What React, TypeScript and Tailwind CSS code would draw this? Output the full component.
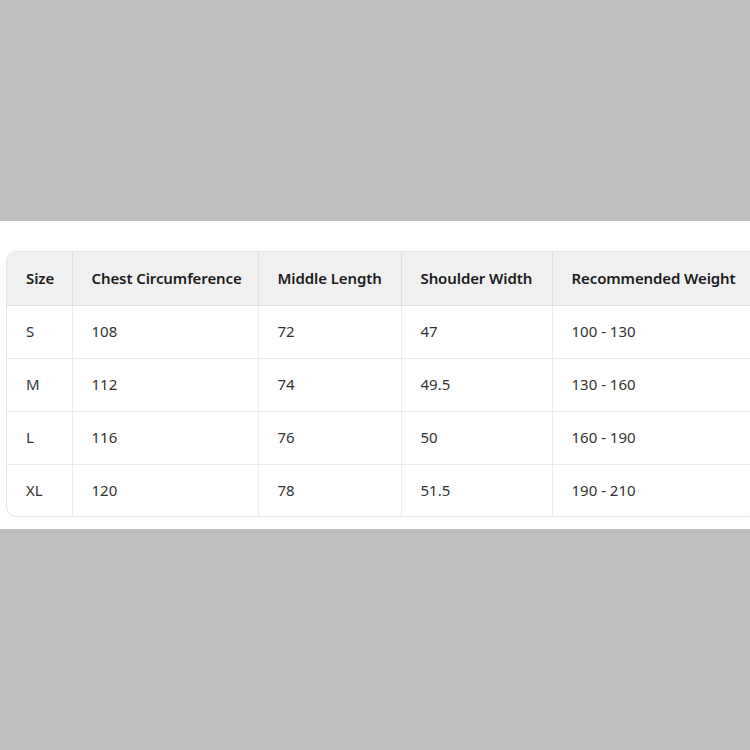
const headers = [
  'Size',
  'Chest Circumference',
  'Middle Length',
  'Shoulder Width',
  'Recommended Weight',
];

const rows = [
  ['S', '108', '72', '47', '100 - 130'],
  ['M', '112', '74', '49.5', '130 - 160'],
  ['L', '116', '76', '50', '160 - 190'],
  ['XL', '120', '78', '51.5', '190 - 210'],
];

const widths = ['w-[65px]', 'w-[186px]', 'w-[143px]', 'w-[151px]', 'w-[205px]'];

export default function App() {
  return (
    <main className="flex h-[750px] w-[750px] flex-col justify-center overflow-hidden bg-[#bfbfbf] font-['Noto_Sans',sans-serif]">
      <section className="overflow-hidden bg-white pl-[6px] pt-[30px] pb-[12px]">
        <div className="w-[752px] overflow-hidden rounded-[10px] border border-[#e6e6e6]">
          <table className="w-full table-fixed border-collapse text-left text-[15px]">
            <thead>
              <tr className="h-[53px] bg-[#f0f0f0]">
                {headers.map((h, i) => (
                  <th
                    key={h}
                    className={`${widths[i]} border-r border-b border-[#e0e0e0] px-[19px] font-semibold tracking-[-0.1px] whitespace-nowrap text-[#1c1c1c] last:border-r-0`}
                  >
                    {h}
                  </th>
                ))}
              </tr>
            </thead>
            <tbody>
              {rows.map((row, r) => (
                <tr
                  key={row[0]}
                  className={r < rows.length - 1 ? 'h-[53px]' : 'h-[52px]'}
                >
                  {row.map((cell, i) => (
                    <td
                      key={i}
                      className={`border-r border-[#ebebeb] px-[19px] text-[#333333] last:border-r-0 ${
                        r < rows.length - 1 ? 'border-b' : ''
                      }`}
                    >
                      {cell}
                    </td>
                  ))}
                </tr>
              ))}
            </tbody>
          </table>
        </div>
      </section>
    </main>
  );
}
